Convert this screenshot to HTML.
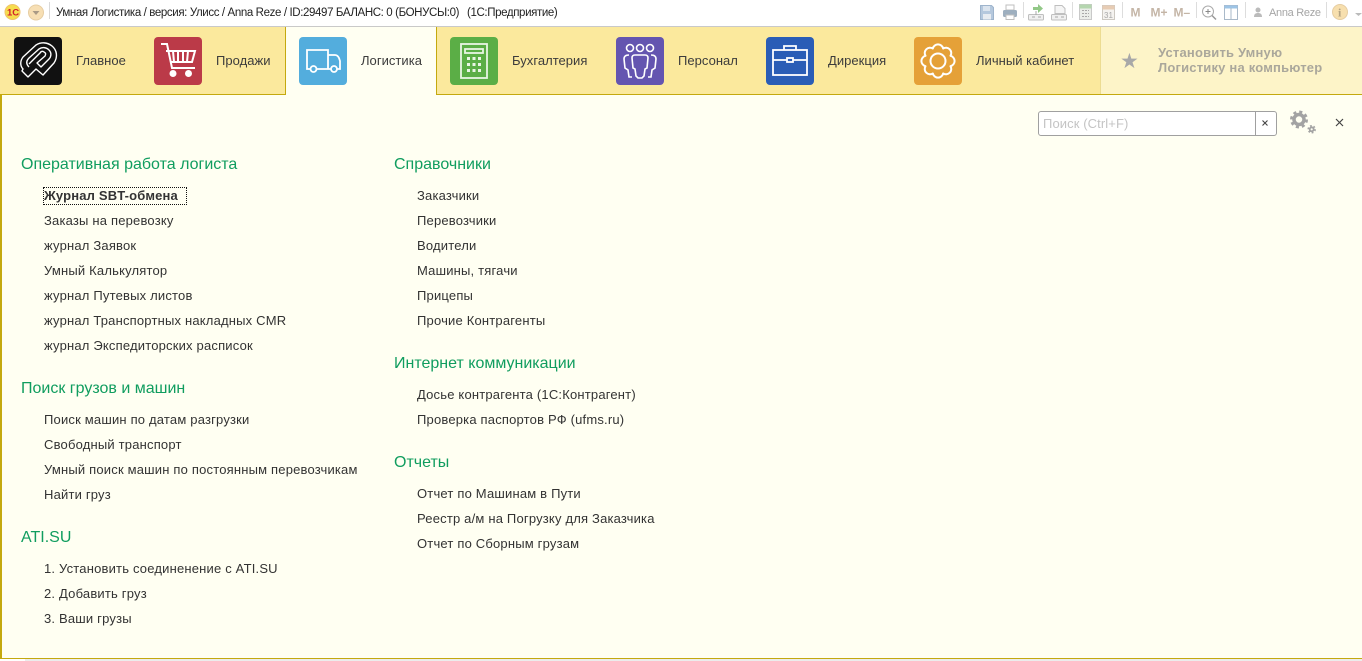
<!DOCTYPE html>
<html lang="ru"><head><meta charset="utf-8"><title>Умная Логистика</title>
<style>
html,body{margin:0;padding:0;background:#fff}
body{position:relative;width:1362px;height:661px;overflow:hidden;font-family:"Liberation Sans",Arial,sans-serif;color:#333}
.a{position:absolute;white-space:nowrap}
.ic{position:absolute;top:37px;width:48px;height:48px;border-radius:4px}
.ic svg{display:block;position:absolute;left:0;top:0}
.t{position:absolute;top:53px;font-size:13px;line-height:15px;color:#3c3c3c;white-space:nowrap;letter-spacing:.03px}
.h{position:absolute;font-size:16px;line-height:20px;color:#109d5f;white-space:nowrap}
.l{position:absolute;font-size:13px;line-height:16px;color:#333;white-space:nowrap;letter-spacing:.19px}
.sep{position:absolute;top:2px;width:1px;height:16px;background:#d9d9d9}
</style></head><body>
<!-- title bar -->
<div class="a" style="left:0;top:0;width:1362px;height:26px;background:#fff;border-bottom:1px solid #c9c9c9"></div>
<svg class="a" style="left:4px;top:2px" width="42" height="20" viewBox="0 0 42 20">
<circle cx="8.500" cy="10" r="7.500" fill="#f6dd4e" stroke="#efc26a"/>
<text x="3" y="13.500" font-family="Liberation Sans" font-weight="700" font-size="9.500" fill="#d0202a">1С</text>
<circle cx="32" cy="10.500" r="7.500" fill="#f7dfb4" stroke="#e6cda2"/>
<path d="M28.500 9h7l-3.500 4z" fill="#a99a85"/>
</svg>
<div class="sep" style="left:49px;top:2px;height:17px"></div>
<div class="a" style="left:56px;top:6px;font-size:11.500px;line-height:14px;color:#222;letter-spacing:-.38px">Умная Логистика / версия: Улисс / Anna Reze / ID:29497 БАЛАНС: 0 (БОНУСЫ:0)</div>
<div class="a" style="left:467px;top:6px;font-size:11.500px;line-height:14px;color:#222;letter-spacing:-.38px">(1С:Предприятие)</div>
<!-- toolbar -->
<svg class="a" style="left:975px;top:0" width="387" height="26" viewBox="0 0 387 26">
<g opacity=".85">
<path d="M5.500 5.500h11l2 2v12h-13z" fill="#a9bfd8" stroke="#8ea8c4"/><rect x="8" y="6" width="7" height="5" fill="#d5e0ec"/><rect x="8" y="14" width="8" height="5.500" fill="#e4e9ef"/>
<rect x="31" y="5" width="8" height="5" fill="#fff" stroke="#b5b5b5"/><rect x="28" y="10" width="14" height="7" rx="1.500" fill="#8ea2b5"/><rect x="31" y="15" width="8" height="4.500" fill="#fff" stroke="#b5b5b5"/>
<path d="M58 7h5V4l5 4.500-5 4.500v-3h-5z" fill="#7fbf73"/><rect x="53.500" y="14.500" width="15" height="5.500" rx="1" fill="#eee" stroke="#b5b5b5"/><path d="M57 17h3m3 0h3M61 11v4" stroke="#999"/>
<path d="M80 5.500h7l3 3v5H80z" fill="#f4f4f4" stroke="#b5b5b5"/><rect x="76.500" y="14.500" width="15" height="5.500" rx="1" fill="#eee" stroke="#b5b5b5"/><path d="M80 17h3m3 0h3" stroke="#999"/>
<rect x="104.500" y="4.500" width="12" height="15" fill="#e7ebe6" stroke="#c0c0c0"/><rect x="104.500" y="4.500" width="12" height="4" fill="#a9cfa2"/><path d="M107 10.500h2m1 0h2m1 0h1M107 13.500h2m1 0h2m1 0h1M107 16.500h2m1 0h2m1 0h1" stroke="#999"/>
<rect x="127.500" y="5.500" width="12" height="14" fill="#f4f2ee" stroke="#c5c0b8"/><rect x="127.500" y="5.500" width="12" height="4" fill="#e3c4a8"/>
<text x="129" y="18" font-family="Liberation Sans" font-size="8" fill="#999">31</text>
</g>
<rect x="48" y="2" width="1" height="16" fill="#ddd"/>
<rect x="97" y="2" width="1" height="16" fill="#ddd"/>
<rect x="147" y="2" width="1" height="16" fill="#ddd"/>
<g font-family="Liberation Sans" font-weight="700" font-size="12" fill="#c4b5a6"><text x="155.500" y="16.500">M</text><text x="175.500" y="16.500">M+</text><text x="198.500" y="16.500">M–</text></g>
<rect x="221" y="2" width="1" height="16" fill="#ddd"/>
<circle cx="233" cy="11.500" r="5.500" fill="#fff" stroke="#aaa"/><path d="M230.500 11.500h5M233 9v5" stroke="#888"/><path d="M237 15.500l4 4" stroke="#999" stroke-width="1.500"/>
<rect x="249.500" y="5.500" width="13" height="14" fill="#fff" stroke="#a9b9c9"/><rect x="249.500" y="5.500" width="13" height="3" fill="#9dc4e6"/><path d="M256 8v12" stroke="#a9b9c9"/>
<rect x="270" y="2" width="1" height="16" fill="#ddd"/>
<circle cx="283" cy="10" r="2.500" fill="#bbb"/><path d="M279 17c0-3 1.500-4 4-4s4 1 4 4z" fill="#bbb"/>
<rect x="351" y="2" width="1" height="16" fill="#ddd"/>
<circle cx="365" cy="12" r="7.500" fill="#f7dfae" stroke="#e6cda2"/>
<text x="363" y="16.500" font-family="Liberation Serif" font-weight="700" font-size="12" fill="#b5a483">i</text>
<path d="M380 13h7l-3.500 3z" fill="#bbb"/>
</svg>
<div class="a" style="left:1269px;top:6px;font-size:11px;line-height:14px;color:#a5a5a5;letter-spacing:-.3px">Anna Reze</div>

<!-- tab strip -->
<div class="a" style="left:0;top:27px;width:1101px;height:67px;background:#fbe99d"></div>
<div class="a" style="left:1100px;top:27px;width:262px;height:67px;background:#fdf4c8;border-left:1px solid #ecdc92;box-sizing:border-box"></div>
<div class="a" style="left:285px;top:27px;width:152px;height:68px;background:#fffff2;border-left:1px solid #c4a90f;border-right:1px solid #c4a90f;box-sizing:border-box"></div>
<div class="a" style="left:0;top:94px;width:285px;height:1px;background:#c4a90f"></div>
<div class="a" style="left:437px;top:94px;width:925px;height:1px;background:#c4a90f"></div>

<div class="ic" style="left:14px;background:#111"><svg width="48" height="48" viewBox="0 0 48 48" fill="none" stroke="#fff" stroke-width="1.400" stroke-linejoin="round"><path d="M8 34L14 40 22 32 29 38 40 26C44 20 43 13 38 9 33 5 27 5 22 8L9 20C6 24 6 29 9 32Z" fill="#111"/><path d="M15 30C12 27 12 24 15 21L25 12C28 10 32 10 35 13 38 16 37 20 35 22L27 30 23 26 31 19C32 17 32 16 30 15 29 14 27 14 26 16L15 27"/></svg></div>
<div class="t" style="left:76px">Главное</div>

<div class="ic" style="left:154px;background:#bb3a48"><svg width="48" height="48" viewBox="0 0 48 48" fill="none" stroke="#fff" stroke-width="2"><path d="M7 7h6l5 24h23"/><path d="M12 14h29l-3 11H16"/><path d="M19 14l1 11M24 14v11M29 14v11M34 14l-1 11"/><circle cx="19" cy="36.500" r="2.500" fill="#fff"/><circle cx="34.500" cy="36.500" r="2.500" fill="#fff"/></svg></div>
<div class="t" style="left:216px">Продажи</div>

<div class="ic" style="left:299px;background:#53addd"><svg width="48" height="48" viewBox="0 0 48 48" fill="none" stroke="#fff" stroke-width="1.800"><path d="M11 32H8V13h21v19H18M29 18h7c2 0 3 1 4 3l1 3v8h-3M29 32h3"/><circle cx="14.500" cy="32" r="3"/><circle cx="35" cy="32" r="3"/></svg></div>
<div class="t" style="left:361px">Логистика</div>

<div class="ic" style="left:450px;background:#5bae46"><svg width="48" height="48" viewBox="0 0 48 48" fill="none" stroke="#e9f5e4" stroke-width="1.800"><rect x="11" y="7" width="26" height="34"/><rect x="15" y="12" width="18" height="4"/><path d="M17 20h3v3h-3zM22.500 20h3v3h-3zM28 20h3v3h-3zM17 26h3v3h-3zM22.500 26h3v3h-3zM28 26h3v3h-3zM17 32h3v3h-3zM22.500 32h3v3h-3zM28 32h3v3h-3z" fill="#e9f5e4" stroke="none"/></svg></div>
<div class="t" style="left:512px">Бухгалтерия</div>

<div class="ic" style="left:616px;background:#6455b0"><svg width="48" height="48" viewBox="0 0 48 48" fill="none" stroke="#fff" stroke-width="1.600"><circle cx="14" cy="11" r="3.500"/><circle cx="24" cy="11" r="3.500"/><circle cx="34" cy="11" r="3.500"/><path d="M19 18h10c2 0 3 1 3 3l-1 10-2 1-1 7-2 2h-4l-2-2-1-7-2-1-1-10c0-2 1-3 3-3z"/><path d="M13 18c-3 0-5 1-5 4l1 9 3 2 1 7h3M35 18c3 0 5 1 5 4l-1 9-3 2-1 7h-3"/></svg></div>
<div class="t" style="left:678px">Персонал</div>

<div class="ic" style="left:766px;background:#2a5db6"><svg width="48" height="48" viewBox="0 0 48 48" fill="none" stroke="#fff" stroke-width="1.800"><rect x="7" y="13" width="34" height="25"/><path d="M18 13V9h12v4M7 23h14M27 23h14"/><rect x="21" y="21" width="6" height="4"/></svg></div>
<div class="t" style="left:828px">Дирекция</div>

<div class="ic" style="left:914px;background:#e5a138"><svg width="48" height="48" viewBox="0 0 48 48" fill="none" stroke="#fff" stroke-width="2"><circle cx="24" cy="24" r="7.500"/><path d="M36.470 18.830A5.300 5.300 0 0 1 36.470 29.170 5.300 5.300 0 0 1 29.170 36.470 5.300 5.300 0 0 1 18.830 36.470 5.300 5.300 0 0 1 11.530 29.170 5.300 5.300 0 0 1 11.530 18.830 5.300 5.300 0 0 1 18.830 11.530 5.300 5.300 0 0 1 29.170 11.530 5.300 5.300 0 0 1 36.470 18.830Z" stroke-linejoin="round"/></svg></div>
<div class="t" style="left:976px">Личный кабинет</div>

<div class="a" style="left:1120px;top:49px;font-size:21px;line-height:26px;color:#a8a8a8">★</div>
<div class="a" style="left:1158px;top:45px;font-size:13px;line-height:15px;font-weight:700;color:#aaa79b;letter-spacing:.2px">Установить Умную<br>Логистику на компьютер</div>

<!-- content -->
<div class="a" style="left:0;top:95px;width:1362px;height:564px;background:#fffff2;border-left:2px solid #c4a90f;border-bottom:1px solid #c4a90f;box-sizing:border-box"></div>
<div class="a" style="left:25px;top:659px;width:1337px;height:2px;background:#ececec"></div>

<!-- search -->
<div class="a" style="left:1038px;top:111px;width:239px;height:25px;background:#fff;border:1px solid #a0a0a0;border-radius:3px;box-sizing:border-box"></div>
<div class="a" style="left:1255px;top:112px;width:1px;height:23px;background:#a0a0a0"></div>
<div class="a" style="left:1043px;top:116px;font-size:13px;line-height:15px;color:#c4c4c4;letter-spacing:.1px">Поиск (Ctrl+F)</div>
<svg class="a" style="left:1260px;top:118px" width="10" height="10" viewBox="0 0 10 10"><path d="M2.500 2.500l5 5m0-5l-5 5" stroke="#444" stroke-width="1.100"/></svg>
<svg class="a" style="left:1288px;top:109px" width="30" height="26" viewBox="0 0 30 26"><g fill="none" stroke="#a3a3a3"><circle cx="11" cy="10.500" r="5" stroke-width="3.500"/><circle cx="11" cy="10.500" r="7.500" stroke-width="3" stroke-dasharray="3 2.890"/><circle cx="23.700" cy="20.300" r="2" stroke-width="1.800"/><circle cx="23.700" cy="20.300" r="3.500" stroke-width="1.500" stroke-dasharray="1.800 1.860"/></g></svg>
<svg class="a" style="left:1334px;top:117px" width="11" height="11" viewBox="0 0 11 11"><path d="M2 2l7 7m0-7l-7 7" stroke="#444" stroke-width="1.200"/></svg>

<!-- col 1 -->
<div class="h" style="left:21px;top:155px">Оперативная работа логиста</div>
<div class="a" style="left:43px;top:187px;width:142px;height:16px;border:1px dotted #111"></div>
<div class="l" style="left:44px;top:188px;font-weight:700;letter-spacing:.17px">Журнал SBT-обмена</div>
<div class="l" style="left:44px;top:213px">Заказы на перевозку</div>
<div class="l" style="left:44px;top:238px">журнал Заявок</div>
<div class="l" style="left:44px;top:263px">Умный Калькулятор</div>
<div class="l" style="left:44px;top:288px">журнал Путевых листов</div>
<div class="l" style="left:44px;top:313px">журнал Транспортных накладных CMR</div>
<div class="l" style="left:44px;top:338px">журнал Экспедиторских расписок</div>
<div class="h" style="left:21px;top:379px">Поиск грузов и машин</div>
<div class="l" style="left:44px;top:412px">Поиск машин по датам разгрузки</div>
<div class="l" style="left:44px;top:437px">Свободный транспорт</div>
<div class="l" style="left:44px;top:462px">Умный поиск машин по постоянным перевозчикам</div>
<div class="l" style="left:44px;top:487px">Найти груз</div>
<div class="h" style="left:21px;top:528px">ATI.SU</div>
<div class="l" style="left:44px;top:561px">1. Установить соединенение с ATI.SU</div>
<div class="l" style="left:44px;top:586px">2. Добавить груз</div>
<div class="l" style="left:44px;top:611px">3. Ваши грузы</div>

<!-- col 2 -->
<div class="h" style="left:394px;top:155px">Справочники</div>
<div class="l" style="left:417px;top:188px">Заказчики</div>
<div class="l" style="left:417px;top:213px">Перевозчики</div>
<div class="l" style="left:417px;top:238px">Водители</div>
<div class="l" style="left:417px;top:263px">Машины, тягачи</div>
<div class="l" style="left:417px;top:288px">Прицепы</div>
<div class="l" style="left:417px;top:313px">Прочие Контрагенты</div>
<div class="h" style="left:394px;top:354px">Интернет коммуникации</div>
<div class="l" style="left:417px;top:387px">Досье контрагента (1С:Контрагент)</div>
<div class="l" style="left:417px;top:412px">Проверка паспортов РФ (ufms.ru)</div>
<div class="h" style="left:394px;top:453px">Отчеты</div>
<div class="l" style="left:417px;top:486px">Отчет по Машинам в Пути</div>
<div class="l" style="left:417px;top:511px">Реестр а/м на Погрузку для Заказчика</div>
<div class="l" style="left:417px;top:536px">Отчет по Сборным грузам</div>
</body></html>
